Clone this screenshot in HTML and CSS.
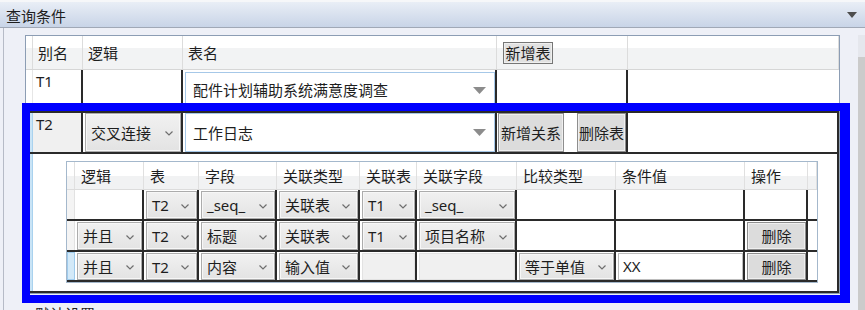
FILE: index.html
```html
<!DOCTYPE html>
<html lang="zh-CN">
<head>
    <meta charset="UTF-8">
    <title>查询条件</title>
    <link rel="stylesheet" href="styles.css">
</head>
<body>
    <div class="panel-title">
        <span>查询条件</span>
        <svg class="title-arrow" width="10" height="6" viewBox="0 0 10 6"><path d="M0 0H10L5 6Z" fill="#4d4d4d"/></svg>
    </div>
    <div class="panel">
        <div class="panel-main">
            <div class="grid">
                <div class="row head">
                    <div class="cell"></div>
                    <div class="cell">别名</div>
                    <div class="cell">逻辑</div>
                    <div class="cell">表名</div>
                    <div class="cell"><button class="btn btn-head">新增表</button></div>
                    <div class="cell"></div>
                </div>
                <div class="row r1">
                    <div class="rh"></div>
                    <div class="alias dk">T1</div>
                    <div class="dk"></div>
                    <div class="dk combo-cell"><div class="combo combo-white">配件计划辅助系统满意度调查<svg width="13" height="7" viewBox="0 0 13 7"><path d="M0 0H13L6.5 7Z" fill="#8c8c8c"/></svg></div></div>
                    <div class="dk"></div>
                    <div></div>
                </div>
                <div class="row r2">
                    <div class="rh sel"></div>
                    <div class="alias gray dk">T2</div>
                    <div class="dk logic-cell"><div class="combo">交叉连接<svg class="chev" width="8" height="5" viewBox="0 0 8 5"><polyline points="0.5,0.5 4,4 7.5,0.5" fill="none" stroke="#6e6e6e" stroke-width="1.2"/></svg></div></div>
                    <div class="dk table-cell"><div class="combo combo-white">工作日志<svg width="13" height="7" viewBox="0 0 13 7"><path d="M0 0H13L6.5 7Z" fill="#8c8c8c"/></svg></div></div>
                    <div class="dk btn-cell"><button class="btn btn-add">新增关系</button><button class="btn btn-del">删除表</button></div>
                    <div class="dk"></div>
                </div>
                <div class="detail">
                    <div class="rh sel"></div>
                    <div class="detail-body">
                        <div class="sub">
                            <div class="srow shead">
                                <div></div>
                                <div>逻辑</div>
                                <div>表</div>
                                <div>字段</div>
                                <div>关联类型</div>
                                <div>关联表</div>
                                <div>关联字段</div>
                                <div>比较类型</div>
                                <div>条件值</div>
                                <div>操作</div>
                                <div></div>
                            </div>
                            <div class="srow sdata">
                                <div class="srh"></div>
                                <div class="dk"></div>
                                <div class="dk"><div class="combo">T2<svg class="chev" width="8" height="5" viewBox="0 0 8 5"><polyline points="0.5,0.5 4,4 7.5,0.5" fill="none" stroke="#6e6e6e" stroke-width="1.2"/></svg></div></div>
                                <div class="dk"><div class="combo">_seq_<svg class="chev" width="8" height="5" viewBox="0 0 8 5"><polyline points="0.5,0.5 4,4 7.5,0.5" fill="none" stroke="#6e6e6e" stroke-width="1.2"/></svg></div></div>
                                <div class="dk"><div class="combo">关联表<svg class="chev" width="8" height="5" viewBox="0 0 8 5"><polyline points="0.5,0.5 4,4 7.5,0.5" fill="none" stroke="#6e6e6e" stroke-width="1.2"/></svg></div></div>
                                <div class="dk"><div class="combo">T1<svg class="chev" width="8" height="5" viewBox="0 0 8 5"><polyline points="0.5,0.5 4,4 7.5,0.5" fill="none" stroke="#6e6e6e" stroke-width="1.2"/></svg></div></div>
                                <div class="dk"><div class="combo">_seq_<svg class="chev" width="8" height="5" viewBox="0 0 8 5"><polyline points="0.5,0.5 4,4 7.5,0.5" fill="none" stroke="#6e6e6e" stroke-width="1.2"/></svg></div></div>
                                <div class="dk"></div>
                                <div class="dk"></div>
                                <div class="dk"></div>
                                <div></div>
                            </div>
                            <div class="srow sdata">
                                <div class="srh"></div>
                                <div class="dk"><div class="combo">并且<svg class="chev" width="8" height="5" viewBox="0 0 8 5"><polyline points="0.5,0.5 4,4 7.5,0.5" fill="none" stroke="#6e6e6e" stroke-width="1.2"/></svg></div></div>
                                <div class="dk"><div class="combo">T2<svg class="chev" width="8" height="5" viewBox="0 0 8 5"><polyline points="0.5,0.5 4,4 7.5,0.5" fill="none" stroke="#6e6e6e" stroke-width="1.2"/></svg></div></div>
                                <div class="dk"><div class="combo">标题<svg class="chev" width="8" height="5" viewBox="0 0 8 5"><polyline points="0.5,0.5 4,4 7.5,0.5" fill="none" stroke="#6e6e6e" stroke-width="1.2"/></svg></div></div>
                                <div class="dk"><div class="combo">关联表<svg class="chev" width="8" height="5" viewBox="0 0 8 5"><polyline points="0.5,0.5 4,4 7.5,0.5" fill="none" stroke="#6e6e6e" stroke-width="1.2"/></svg></div></div>
                                <div class="dk"><div class="combo">T1<svg class="chev" width="8" height="5" viewBox="0 0 8 5"><polyline points="0.5,0.5 4,4 7.5,0.5" fill="none" stroke="#6e6e6e" stroke-width="1.2"/></svg></div></div>
                                <div class="dk"><div class="combo">项目名称<svg class="chev" width="8" height="5" viewBox="0 0 8 5"><polyline points="0.5,0.5 4,4 7.5,0.5" fill="none" stroke="#6e6e6e" stroke-width="1.2"/></svg></div></div>
                                <div class="dk"></div>
                                <div class="dk"></div>
                                <div class="dk"><button class="btn btn-fill">删除</button></div>
                                <div></div>
                            </div>
                            <div class="srow sdata last">
                                <div class="srh sel"></div>
                                <div class="dk"><div class="combo">并且<svg class="chev" width="8" height="5" viewBox="0 0 8 5"><polyline points="0.5,0.5 4,4 7.5,0.5" fill="none" stroke="#6e6e6e" stroke-width="1.2"/></svg></div></div>
                                <div class="dk"><div class="combo">T2<svg class="chev" width="8" height="5" viewBox="0 0 8 5"><polyline points="0.5,0.5 4,4 7.5,0.5" fill="none" stroke="#6e6e6e" stroke-width="1.2"/></svg></div></div>
                                <div class="dk"><div class="combo">内容<svg class="chev" width="8" height="5" viewBox="0 0 8 5"><polyline points="0.5,0.5 4,4 7.5,0.5" fill="none" stroke="#6e6e6e" stroke-width="1.2"/></svg></div></div>
                                <div class="dk"><div class="combo">输入值<svg class="chev" width="8" height="5" viewBox="0 0 8 5"><polyline points="0.5,0.5 4,4 7.5,0.5" fill="none" stroke="#6e6e6e" stroke-width="1.2"/></svg></div></div>
                                <div class="dk"><div class="blank"></div></div>
                                <div class="dk"><div class="blank"></div></div>
                                <div class="dk"><div class="combo">等于单值<svg class="chev" width="8" height="5" viewBox="0 0 8 5"><polyline points="0.5,0.5 4,4 7.5,0.5" fill="none" stroke="#6e6e6e" stroke-width="1.2"/></svg></div></div>
                                <div class="dk"><div class="text-input">XX</div></div>
                                <div class="dk"><button class="btn btn-fill">删除</button></div>
                                <div></div>
                            </div>
                        </div>
                    </div>
                </div>
                <div class="highlight"></div>
            </div>
            <div class="next-title">默认设置</div>
        </div>
        <div class="scrollbar"></div>
    </div>
</body>
</html>
```

FILE: styles.css
```css
* {
    box-sizing: border-box;
    margin: 0;
    padding: 0;
}
body {
    font-family: "Noto Sans", "Noto Sans CJK SC", sans-serif;
    font-size: 15px;
    line-height: 20px;
    color: #1e1e1e;
    background-color: #eef0f7;
    width: 865px;
    height: 310px;
    overflow: hidden;
}
.panel-title {
    height: 28px;
    display: flex;
    align-items: center;
    justify-content: space-between;
    padding: 2px 8px 0 6px;
    border-top: 2px solid #f6f7f9;
    border-bottom: 1px solid #a0a8b6;
    background: linear-gradient(#e9eef6, #c8d4e7);
}
.title-arrow {
    margin-top: -2px;
}
.panel {
    display: flex;
    height: 282px;
    margin-left: 3px;
    border-left: 1px solid #b6bbc7;
}
.panel-main {
    flex: 1;
    padding: 7px 0 0 21px;
}
.scrollbar {
    width: 7px;
    margin-top: 7px;
    background: linear-gradient(#e5e7ed 0 22px, #cbcbcb 22px);
}

/* outer table */
.grid {
    position: relative;
    width: 815px;
    border: 1px solid #8c9db4;
    background-color: #fff;
}
.row {
    display: grid;
    grid-template-columns: 7px 50px 100px 314px 131px 211px;
}
.head {
    height: 34px;
    border-bottom: 1px solid #d6d6d6;
    background: linear-gradient(#fff 0 36%, #f2f3f4 36%);
}
.head .cell {
    display: flex;
    align-items: center;
    padding-left: 5px;
    border-right: 1px solid #dcdcdc;
}
.head .cell:first-child {
    padding-left: 0;
}
.r1 {
    height: 43px;
    border-bottom: 2px solid #2a2a2a;
}
.r2 {
    height: 41px;
    border-bottom: 2px solid #2a2a2a;
}
.dk {
    border-right: 2px solid #2a2a2a;
}
.rh {
    border-right: 1px solid #e6e6e6;
}
.rh.sel {
    background-color: #c9e4f6;
    border-right-color: #a9d2ee;
}
.alias {
    padding: 1px 0 0 3px;
}
.alias.gray {
    background-color: #f0f0f0;
}
.combo-cell {
    padding: 2px 0 3px 2px;
}
.logic-cell {
    padding-left: 2px;
}
.table-cell {
    padding-left: 2px;
}
.btn-cell {
    display: flex;
    gap: 13px;
    padding-left: 1px;
}

/* controls */
.combo {
    display: flex;
    align-items: center;
    justify-content: space-between;
    height: 100%;
    padding: 0 7px 0 5px;
    white-space: nowrap;
    background: linear-gradient(#f1f1f1, #e3e3e3);
    border: 1px solid #acacac;
    box-shadow: inset 0 0 0 1px #f7f7f7;
}
.combo-white {
    padding: 0 8px 0 7px;
    background: #fff;
    border-color: #a6c8e8;
    box-shadow: none;
}
.chev {
    flex-shrink: 0;
    margin-top: 2px;
}
.btn {
    font: inherit;
    color: inherit;
    background-color: #dcdcdc;
    border: 1px solid #8e8e8e;
    box-shadow: inset 0 0 0 1px #efefef;
    white-space: nowrap;
}
.btn-head {
    width: 50px;
    height: 22px;
    margin-left: 1px;
    line-height: 18px;
    background-color: #e1e1e1;
    border-color: #767676;
}
.btn-add {
    width: 66px;
}
.btn-del {
    width: 49px;
}
.btn-fill {
    width: 100%;
    height: 100%;
}
.blank {
    height: 100%;
    background-color: #f0f0f0;
    border: 1px solid #e2e2e2;
}
.text-input {
    height: 100%;
    padding: 2px 0 0 4px;
    background-color: #fff;
    border: 1px solid #bdbdbd;
}

/* detail with the join table */
.detail {
    display: grid;
    grid-template-columns: 7px 1fr;
    height: 139px;
    border-bottom: 2px solid #2a2a2a;
}
.detail-body {
    border-right: 2px solid #2a2a2a;
}
.sub {
    width: 752px;
    margin: 7px 0 0 33px;
    border: 1px solid #a4b8cc;
}
.srow {
    display: grid;
    grid-template-columns: 8px 69px 55px 78px 83px 57px 100px 99px 129px 63px 9px;
}
.shead {
    height: 28px;
    border-bottom: 1px solid #dcdcdc;
    background: linear-gradient(#fff 0 52%, #f1f2f3 52%);
}
.shead > div {
    display: flex;
    align-items: center;
    padding-left: 6px;
    border-right: 1px solid #e0e0e0;
}
.shead > div:first-child {
    padding-left: 0;
}
.sdata {
    height: 31px;
    border-bottom: 2px solid #2a2a2a;
}
.sdata.last {
    height: 30px;
}
.sdata > div {
    padding: 1px 0 0 2px;
}
.sdata > .srh {
    padding: 0;
    background-color: #f4f4f4;
    border-right: 1px solid #e2e2e2;
}
.sdata > .srh.sel {
    background-color: #d3e9f8;
    border: 1px solid #9fcbec;
}

/* blue frame marking the selected row */
.highlight {
    position: absolute;
    left: -4px;
    top: 67px;
    width: 828px;
    height: 200px;
    border: solid #0000ff;
    border-width: 8px 10px 8px 8px;
    pointer-events: none;
}
.next-title {
    margin: 10px 0 0 10px;
}
```
